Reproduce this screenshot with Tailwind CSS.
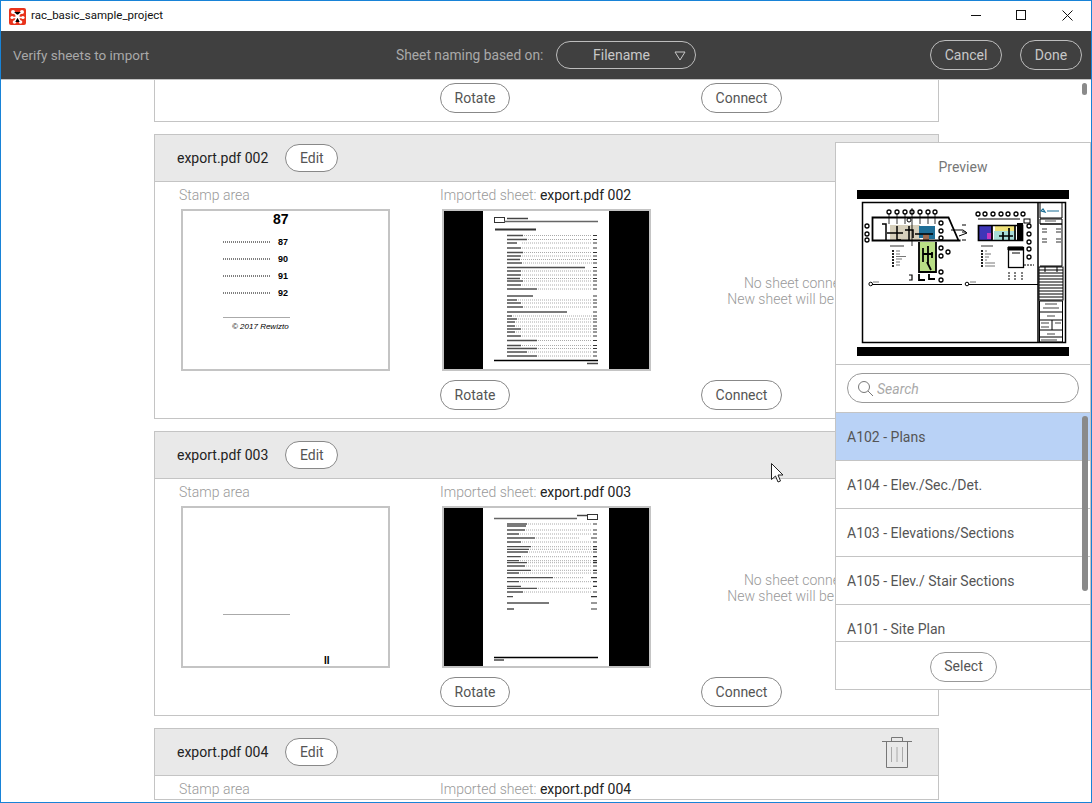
<!DOCTYPE html>
<html lang="en">
<head>
    <meta charset="UTF-8">
    <meta name="viewport" content="width=device-width, initial-scale=1.0">
    <title>rac_basic_sample_project</title>
    <script src="https://cdn.jsdelivr.net/npm/@tailwindcss/browser@4"></script>
</head>
<body class="bg-white">
<div class="relative w-[1092px] h-[803px] overflow-hidden border border-[#1883d7] bg-white font-[Roboto,sans-serif] text-[14px] text-[#555]">

    <!-- Title bar -->
    <div class="h-[30px] flex items-center pl-[8px] text-[11.500px] text-[#111]">
        <svg class="w-[17px] h-[17px]" viewBox="0 0 17 17">
            <rect width="17" height="17" rx="2" fill="#e8331c"/>
            <circle cx="8.5" cy="8" r="2.2" fill="#fff"/>
            <circle cx="4" cy="4" r="2" fill="#fff"/>
            <circle cx="13" cy="4" r="2" fill="#fff"/>
            <circle cx="3" cy="9.500" r="1.600" fill="#fff"/>
            <circle cx="14" cy="9.500" r="1.600" fill="#fff"/>
            <circle cx="5.500" cy="14" r="1.800" fill="#fff"/>
            <circle cx="11.500" cy="14" r="1.800" fill="#fff"/>
            <path d="M4 4 8.500 8 13 4M3 9.500 14 9.500M5.500 14 8.500 8 11.500 14" stroke="#fff" stroke-width="1.500"/>
        </svg>
        <span class="ml-[5px]">rac_basic_sample_project</span>
        <div class="ml-auto flex items-center">
            <svg class="w-[46px] h-[30px]" viewBox="0 0 46 30"><path d="M18 14.5h10" stroke="#111"/></svg>
            <svg class="w-[46px] h-[30px]" viewBox="0 0 46 30"><rect x="17.5" y="9.5" width="9" height="9" fill="none" stroke="#111"/></svg>
            <svg class="w-[46px] h-[30px]" viewBox="0 0 46 30"><path d="M17.5 9.5 27.5 19.5M27.5 9.5 17.5 19.5" stroke="#111"/></svg>
        </div>
    </div>

    <!-- Toolbar -->
    <div class="h-[49px] bg-[#404040] border-b border-[#c4c4c4] flex items-center pl-[12px] text-[#a9a9a9]">
        <span class="w-[137px] text-[13.5px] whitespace-nowrap">Verify sheets to import</span>
        <span class="ml-[246px] w-[148px] text-[13.8px] whitespace-nowrap">Sheet naming based on:</span>
        <div class="relative ml-[12px] w-[140px] h-[28px] rounded-full border border-[#bdbdbd] flex items-center justify-center pr-[9px] text-[#c8c8c8]">
            Filename
            <svg class="absolute right-[9px] top-[9px] w-[12px] h-[10px]" viewBox="0 0 12 10"><path d="M1 1h10L6 9z" fill="none" stroke="#c8c8c8"/></svg>
        </div>
        <button class="ml-auto w-[72px] h-[30px] rounded-full border border-[#bdbdbd] text-[#c8c8c8]">Cancel</button>
        <button class="ml-[18px] mr-[9px] w-[62px] h-[30px] rounded-full border border-[#bdbdbd] text-[#c8c8c8]">Done</button>
    </div>

    <!-- Sheet list -->
    <div class="flex flex-col gap-[12px] pl-[153px]">

        <div class="w-[785px] h-[42px] border border-t-0 border-[#c4c4c4] pt-[3px] flex">
            <button class="ml-[285px] w-[70px] h-[30px] rounded-full border border-[#888]">Rotate</button>
            <button class="ml-[191px] w-[81px] h-[30px] rounded-full border border-[#888]">Connect</button>
        </div>

        <!-- export.pdf 002 -->
        <div class="w-[785px] shrink-0 border border-[#c4c4c4]">
            <div class="h-[47px] bg-[#e9e9e9] border-b border-[#c4c4c4] flex items-center pl-[22px] text-[#222]">
                <span>export.pdf 002</span>
                <button class="ml-[17px] w-[53px] h-[28px] rounded-full border border-[#888] bg-white text-[#555]">Edit</button>
            </div>
            <div class="grid grid-cols-[261px_261px_214px] pl-[24px] pt-[3px] pb-[8px]">
                <div>
                    <div class="h-[20px] mb-[4px] leading-[20px] font-light text-[#999]">Stamp area</div>
                    <div class="ml-[2px] w-[209px] h-[162px] border-2 border-[#c4c4c4]">
                        <svg width="205" height="158" viewBox="0 0 205 158" font-family="Liberation Sans" fill="#000">
                            <text x="90" y="13" font-size="14" font-weight="700">87</text>
                            <path d="M40 31h47M40 48h47M40 65h47M40 82h47" stroke="#000" stroke-width="1.200" stroke-dasharray="1 1"/>
                            <g font-size="9" font-weight="700"><text x="95" y="34">87</text><text x="95" y="51">90</text><text x="95" y="68">91</text><text x="95" y="85">92</text></g>
                            <path d="M40 106.500h67" stroke="#aaa"/>
                            <text x="49" y="118" font-size="8" font-style="italic">© 2017 Rewizto</text>
                        </svg>
                    </div>
                </div>
                <div>
                    <div class="h-[20px] mb-[4px] leading-[20px] font-light text-[#999]">Imported sheet: <span class="font-normal text-[#222]">export.pdf 002</span></div>
                    <div class="ml-[2px] w-[209px] h-[162px] border-2 border-[#c4c4c4] bg-black">
                        <svg width="205" height="158" viewBox="0 0 205 158" fill="none">
                            <rect x="39" width="126" height="158" fill="#fff"/>
                            <g class="blur-[0.3px]">
                            <rect x="50.500" y="6.500" width="10" height="5" stroke="#333"/>
                            <path d="M60 10.500h94" stroke="#666" stroke-width="1.500"/>
                            <path d="M63 7.500h21" stroke="#444" stroke-width="1.500"/>
                            <path d="M51 18.500h41" stroke="#333" stroke-width="2"/>
                            <path d="M63 24.500h16M63 28.500h20M63 32h10M63 37h14M63 41.500h16M63 45h14M63 48.500h13M63 52h15M63 56.500h78M63 60h14M63 64h14M63 67.500h13M63 70h16M63 74h14M63 78h30M63 85h26M63 89h10M63 92h14M63 96h16M63 101h60M63 105h5M63 108h10M63 111h8M63 115h8M63 118h14M63 121h8M63 125h14M63 129.500h30M63 134.500h14M63 137.500h30M63 141h20M63 145h30" stroke="#222" stroke-width="1.300" stroke-opacity=".8"/>
                            <path d="M80 24.500h68M84 28.500h64M78 32h70M78 37h68M80 41.500h68M78 45h70M77 48.500h71M79 52h69M78 60h70M78 64h70M78 67.500h70M80 70h68M78 74h70M94 78h54M74 89h74M78 92h70M80 96h68M69 105h79M74 108h74M72 111h76M72 115h76M78 118h70M72 121h76M78 125h70M94 129.500h54M78 134.500h70M94 137.500h54M84 141h64M94 145h54" stroke="#aaa" stroke-dasharray="1 1"/>
                            <path d="M149 24.500h4M149 28.500h4M149 32h4M149 37h4M149 41.500h4M149 45h4M149 48.500h4M149 52h4M149 56.500h4M149 60h4M149 64h4M149 67.500h4M149 70h4M149 74h4M149 78h4M149 85h4M149 89h4M149 92h4M149 96h4M149 101h4M149 105h4M149 108h4M149 111h4M149 115h4M149 118h4M149 121h4M149 125h4M149 129.500h4M149 134.500h4M149 137.500h4M149 141h4M149 145h4" stroke="#333" stroke-width="1.200"/>
                            <path d="M50 149.500h104" stroke="#000" stroke-width="1.300"/>
                            <path d="M143 152.500h11" stroke="#444" stroke-width="1.500"/>
                            </g>
                        </svg>
                    </div>
                </div>
                <div class="pt-[26px] flex items-center overflow-hidden w-[134px]">
                    <div class="w-[212px] shrink-0 text-center leading-[16px] font-light text-[#999] whitespace-nowrap">
                        <div>No sheet connected.</div>
                        <div>New sheet will be created.</div>
                    </div>
                </div>
                <div class="mt-[9px]"></div>
                <div class="mt-[9px]"><button class="w-[70px] h-[30px] rounded-full border border-[#888]">Rotate</button></div>
                <div class="mt-[9px]"><button class="w-[81px] h-[30px] rounded-full border border-[#888]">Connect</button></div>
            </div>
        </div>

        <!-- export.pdf 003 -->
        <div class="w-[785px] shrink-0 border border-[#c4c4c4]">
            <div class="h-[47px] bg-[#e9e9e9] border-b border-[#c4c4c4] flex items-center pl-[22px] text-[#222]">
                <span>export.pdf 003</span>
                <button class="ml-[17px] w-[53px] h-[28px] rounded-full border border-[#888] bg-white text-[#555]">Edit</button>
            </div>
            <div class="grid grid-cols-[261px_261px_214px] pl-[24px] pt-[3px] pb-[8px]">
                <div>
                    <div class="h-[20px] mb-[4px] leading-[20px] font-light text-[#999]">Stamp area</div>
                    <div class="ml-[2px] w-[209px] h-[162px] border-2 border-[#c4c4c4]">
                        <svg width="205" height="158" viewBox="0 0 205 158" font-family="Liberation Sans" fill="#000">
                            <path d="M40 106.500h67" stroke="#aaa"/>
                            <text x="141" y="156" font-size="10" font-weight="700">II</text>
                        </svg>
                    </div>
                </div>
                <div>
                    <div class="h-[20px] mb-[4px] leading-[20px] font-light text-[#999]">Imported sheet: <span class="font-normal text-[#222]">export.pdf 003</span></div>
                    <div class="ml-[2px] w-[209px] h-[162px] border-2 border-[#c4c4c4] bg-black">
                        <svg width="205" height="158" viewBox="0 0 205 158" fill="none">
                            <rect x="39" width="126" height="158" fill="#fff"/>
                            <g class="blur-[0.3px]">
                            <path d="M50 10.500h83" stroke="#666" stroke-width="1.500"/>
                            <path d="M133 7.500h10" stroke="#444" stroke-width="1.500"/>
                            <rect x="143.500" y="6.500" width="10" height="5" stroke="#333"/>
                            <path d="M63 16h20M63 18h19M63 22h18M63 26h12M63 30h28M63 34h14M63 38.700h24M63 41.300h22M63 44h21M63 48.700h14M63 52.700h12M63 54.700h20M63 58h18M63 62.300h24M63 65h12M63 69.700h46M63 73.700h12M63 78.300h14M63 80.300h30M63 84h16M63 88.700h6M63 95h42M63 101h7" stroke="#222" stroke-width="1.300" stroke-opacity=".8"/>
                            <path d="M84 16h64M82 22h66M76 26h72M92 30h44M78 34h70M88 38.700h60M86 41.300h62M85 44h63M78 48.700h70M76 52.700h72M84 54.700h64M82 58h66M88 62.300h60M76 65h72M110 69.700h30M76 73.700h72M94 80.300h54M80 84h68" stroke="#aaa" stroke-dasharray="1 1"/>
                            <path d="M149 16h4M149 22h4M149 26h4M147 30h6M149 34h4M149 38.700h4M149 41.300h4M149 44h4M149 48.700h4M149 52.700h4M149 54.700h4M149 58h4M149 62.300h4M149 65h4M147 69.700h6M149 73.700h4M149 78.300h4M149 84h4M147 88.700h6M147 95h6M147 101h6" stroke="#333" stroke-width="1.200"/>
                            <path d="M50 149.500h104" stroke="#000" stroke-width="1.300"/>
                            <path d="M50 152h10" stroke="#444" stroke-width="1.500"/>
                            </g>
                        </svg>
                    </div>
                </div>
                <div class="pt-[26px] flex items-center overflow-hidden w-[134px]">
                    <div class="w-[212px] shrink-0 text-center leading-[16px] font-light text-[#999] whitespace-nowrap">
                        <div>No sheet connected.</div>
                        <div>New sheet will be created.</div>
                    </div>
                </div>
                <div class="mt-[9px]"></div>
                <div class="mt-[9px]"><button class="w-[70px] h-[30px] rounded-full border border-[#888]">Rotate</button></div>
                <div class="mt-[9px]"><button class="w-[81px] h-[30px] rounded-full border border-[#888]">Connect</button></div>
            </div>
        </div>

        <!-- export.pdf 004 -->
        <div class="w-[785px] shrink-0 border border-[#c4c4c4]">
            <div class="h-[47px] bg-[#e9e9e9] border-b border-[#c4c4c4] flex items-center pl-[22px] pr-[26px] text-[#222]">
                <span>export.pdf 004</span>
                <button class="ml-[17px] w-[53px] h-[28px] rounded-full border border-[#888] bg-white text-[#555]">Edit</button>
                <svg class="ml-auto w-[30px] h-[31px]" viewBox="0 0 30 31" fill="none">
                    <path d="M0 4.500h30M9.500 4.500V.5h11v4M4.500 4.500v26h21v-26" stroke="#777"/>
                    <path d="M9.500 10v15M15 10v15M20.500 10v15" stroke="#aaa"/>
                </svg>
            </div>
            <div class="grid grid-cols-[261px_261px_214px] pl-[24px] pt-[3px]">
                <div class="h-[20px] leading-[20px] font-light text-[#999]">Stamp area</div>
                <div class="h-[20px] leading-[20px] font-light text-[#999]">Imported sheet: <span class="font-normal text-[#222]">export.pdf 004</span></div>
            </div>
        </div>
    </div>

    <!-- Page scrollbar -->
    <div class="absolute left-[1081px] top-[82px] w-[5px] h-[12px] rounded-full bg-[#8a8a8a]"></div>

    <!-- Sheet picker popup -->
    <div class="absolute left-[834px] top-[141px] w-[256px] h-[548px] border border-[#c4c4c4] bg-white flex flex-col">
        <div class="h-[222px] shrink-0 border-b border-[#c4c4c4] flex flex-col items-center">
            <div class="h-[47px] leading-[48px] text-[#777]">Preview</div>
            <svg class="ml-[-1px]" width="212" height="166" viewBox="0 0 212 166" fill="none">
                <rect width="212" height="166" fill="#fff"/>
                <path d="M0 0h212v9H0zM0 157h212v9H0z" fill="#000"/>
                <rect x="5.500" y="12.500" width="203" height="140" stroke="#000" stroke-width="1.500"/>
                <path d="M181 12.500v140" stroke="#000" stroke-width="1.500"/>
                <!-- left plan -->
                <rect x="33" y="35" width="30" height="15" fill="#d6cfbb"/>
                <rect x="62" y="36" width="16" height="12" fill="#1f6f98"/>
                <rect x="62" y="52" width="17" height="30" fill="#b9df86"/>
                <rect x="72" y="43" width="6" height="6" fill="#1f6f98"/>
                <rect x="66" y="44" width="6" height="6" fill="#9c6a4f"/>
                <path d="M15.500 27.500h76l10 23h-86zM15.500 50.500h88" stroke="#000" stroke-width="1.800"/>
                <path d="M25 34h4v16M40 36v14h4M48 40h8v8M52 36v14M30 43h16M58 44h18" stroke="#000" stroke-width="1.500"/>
                <path d="M62 52v30h17V52M66 58v14M71 56v18M75 62v6M66 64h10M70 72l4 8M62 84v6h6M72 84v5h6" stroke="#000" stroke-width="1.800"/>
                <g stroke="#000" stroke-width="1.300"><circle cx="32" cy="22" r="2"/><circle cx="40" cy="22" r="2"/><circle cx="48" cy="22" r="2"/><circle cx="55" cy="22" r="2"/><circle cx="63" cy="22" r="2"/><circle cx="71" cy="22" r="2"/><circle cx="78" cy="22" r="2"/><circle cx="84" cy="33" r="2"/><circle cx="84" cy="41" r="2"/><circle cx="84" cy="48" r="2"/><circle cx="84" cy="58" r="2"/><circle cx="84" cy="66" r="2"/><circle cx="84" cy="82" r="2"/><circle cx="84" cy="90" r="2"/><circle cx="10" cy="36" r="2"/><circle cx="10" cy="44" r="2"/><circle cx="10" cy="50" r="2"/><circle cx="91" cy="62" r="2"/></g>
                <path d="M32 24v10M40 24v10M48 24v10M55 18v38M63 24v10M71 24v10M78 24v10" stroke="#000" stroke-opacity=".8"/>
                <circle cx="52" cy="30" r="2" stroke="#000"/>
                <path d="M94 40h12l4 3-8 3" stroke="#000"/>
                <path d="M33 56h14" stroke="#555" stroke-width="1.200"/>
                <path d="M36 60v18" stroke="#222" stroke-width="2" stroke-dasharray="2 1"/>
                <path d="M39 61h4M39 64h4M39 66.500h10M39 69h6M39 72h4M39 75h4" stroke="#777"/>
                <path d="M52 85h3v5h-3" stroke="#000" stroke-width="1.200"/>
                <!-- right plan -->
                <rect x="121" y="35" width="14" height="15" fill="#3f36b8"/>
                <rect x="138" y="36" width="20" height="5" fill="#efe27a"/>
                <rect x="137" y="41" width="22" height="9" fill="#a8dcd8"/>
                <rect x="130" y="43" width="6" height="6" fill="#c738c0"/>
                <path d="M121.500 35.500h44v15h-44zM135 36v14M146 42v8M152 38v12M158 36v14M142 46h14" stroke="#000" stroke-width="1.700"/>
                <rect x="160" y="33" width="6" height="17" fill="#000"/>
                <path d="M105 35h4M105 42h4M105 50h4M121 29h42" stroke="#000"/>
                <g stroke="#000" stroke-width="1.300"><circle cx="121" cy="24" r="2"/><circle cx="128" cy="24" r="2"/><circle cx="136" cy="24" r="2"/><circle cx="144" cy="24" r="2"/><circle cx="151" cy="24" r="2"/><circle cx="159" cy="24" r="2"/><circle cx="166" cy="24" r="2"/><circle cx="172" cy="36" r="2"/><circle cx="172" cy="44" r="2"/><circle cx="172" cy="52" r="2"/><circle cx="172" cy="59" r="2"/><circle cx="172" cy="67" r="2"/></g>
                <rect x="167" y="29" width="6" height="4" fill="#fff" stroke="#000"/>
                <rect x="151.500" y="57.500" width="15" height="20" stroke="#000" stroke-width="1.300"/>
                <path d="M151 57h15v3h-15zM155 63h8" fill="#000" stroke="#000"/>
                <path d="M152 82v8M158 82v8M165 82v8M167 75h10" stroke="#000" stroke-dasharray="2 1"/>
                <path d="M124 56h12" stroke="#555" stroke-width="1.200"/>
                <path d="M125 60v18" stroke="#222" stroke-width="2" stroke-dasharray="2 1"/>
                <path d="M128 61h2M128 64h6M128 67h4M128 70h2M128 73h10M128 76h10" stroke="#777"/>
                <!-- section lines -->
                <circle cx="13.700" cy="94" r="1.800" stroke="#000"/>
                <circle cx="110" cy="94" r="1.800" stroke="#000"/>
                <path d="M15 94.500h90M112 94.500h69" stroke="#000" stroke-width="1.200"/>
                <path d="M16 92h6M113 92h6" stroke="#777"/>
                <!-- title block -->
                <path d="M183 13v15h22V13M183 29h22v5h-22zM183 34h22v42h-22M183 77h22" stroke="#000"/>
                <path d="M184 21l2-2 2 3zM190 21h12" stroke="#1a6f96" stroke-width="1.200"/>
                <path d="M188 31h11" stroke="#555"/>
                <path d="M185 39h5M199 39h5M185 42h5M199 42h5M185 49h5M199 49h5M185 52h5M199 52h5" stroke="#333" stroke-width="1.200"/>
                <rect x="182" y="77" width="24" height="33" fill="#fff" stroke="#000"/>
                <path d="M182 80h24M182 83h24M182 86h24M182 89h24M182 92h24M182 95h24M182 98h24M182 101h24M182 104h24M182 107h24" stroke="#000" stroke-width="1.200"/>
                <path d="M188 77v5M200 77v5" stroke="#000"/>
                <rect x="182.500" y="111" width="23" height="41" stroke="#000"/>
                <path d="M183 122h22M183 130h22M183 140h22M183 147h22M195 130v10" stroke="#000"/>
                <path d="M188 114h12M186 118h16M190 126h8M184 133h8M198 133h6M184 137h8M190 144h8M184 150h16" stroke="#444" stroke-width="1.200"/>
            </svg>
        </div>
        <div class="h-[47px] shrink-0 px-[11px] pt-[8px]">
            <div class="h-[30px] rounded-full border border-[#999] flex items-center pl-[9px]">
                <svg class="w-[17px] h-[17px]" viewBox="0 0 17 17" fill="none"><circle cx="7" cy="7" r="5.500" stroke="#777"/><path d="M11 11l5 5" stroke="#777"/></svg>
                <span class="ml-[3px] pt-[2px] italic text-[#a9a9a9]">Search</span>
            </div>
        </div>
        <div class="relative h-[229px] shrink-0 overflow-hidden border-t border-[#c4c4c4]">
            <div class="h-[48px] bg-[#b9d2f6] border-b border-[#c4c4c4] pl-[11px] leading-[49px]">A102 - Plans</div>
            <div class="h-[48px] border-b border-[#c4c4c4] pl-[11px] leading-[49px]">A104 - Elev./Sec./Det.</div>
            <div class="h-[48px] border-b border-[#c4c4c4] pl-[11px] leading-[49px]">A103 - Elevations/Sections</div>
            <div class="h-[48px] border-b border-[#c4c4c4] pl-[11px] leading-[49px]">A105 - Elev./ Stair Sections</div>
            <div class="h-[48px] border-b border-[#c4c4c4] pl-[11px] leading-[49px]">A101 - Site Plan</div>
            <div class="absolute right-[2px] top-[3px] w-[6px] h-[175px] rounded-full bg-[#8a8a8a]"></div>
        </div>
        <div class="flex-1 border-t border-[#c4c4c4] flex items-center justify-center pl-[1px] pt-[2px]">
            <button class="w-[67px] h-[30px] rounded-full border border-[#999]">Select</button>
        </div>
    </div>

    <!-- Mouse cursor -->
    <svg class="absolute left-[770px] top-[462px] w-[13px] h-[21px]" viewBox="0 0 13 21">
        <path d="M.5.5v16l4-3.500 2.500 6 2.500-1-2.500-6h5z" fill="#fff" stroke="#222"/>
    </svg>
</div>
</body>
</html>
